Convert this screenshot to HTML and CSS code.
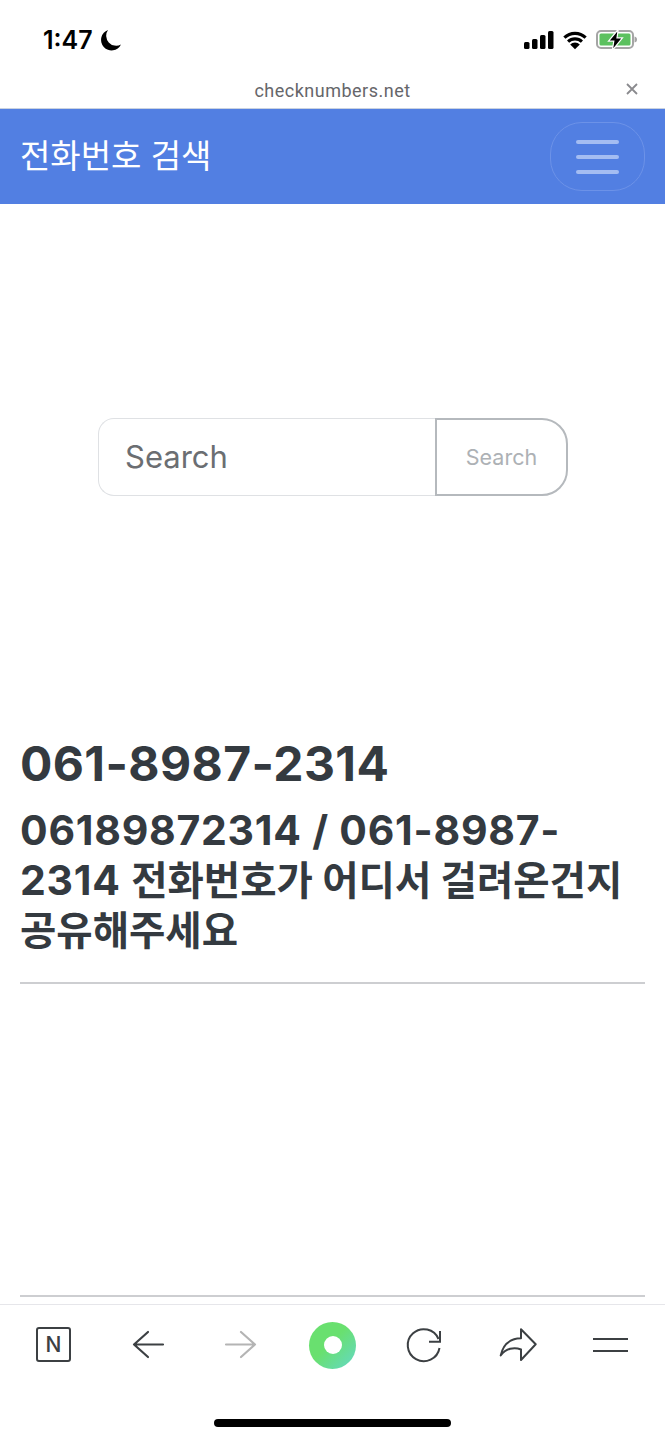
FILE: index.html
```html
<!DOCTYPE html>
<html lang="ko">
<head>
  <meta charset="UTF-8">
  <title>전화번호 검색</title>
  <link rel="stylesheet" href="styles.css">
</head>
<body>

  <div class="status-bar">
    <div class="status-left">
      <span class="clock">1:47</span>
      <svg class="moon" width="22" height="22" viewBox="0 0 22 22"><path d="M8 1A10.500 10.500 0 1 0 21 15.500 A10 10 0 0 1 8 1Z" fill="#000"/></svg>
    </div>
    <div class="status-right">
      <svg width="30" height="18" viewBox="0 0 30 18"><rect x="0" y="11" width="5.500" height="7" rx="1.500"/><rect x="8" y="8" width="5.500" height="10" rx="1.500"/><rect x="16" y="4" width="5.500" height="14" rx="1.500"/><rect x="24" y="0" width="5.500" height="18" rx="1.500"/></svg>
      <svg width="24" height="19" viewBox="0 0 26 19"><path d="M1.500 6.500a16.500 16.500 0 0 1 23 0M5.500 10.700a11 11 0 0 1 15 0" fill="none" stroke="#000" stroke-width="3.400"/><path d="M13 19l-5.200-5.300a7.500 7.500 0 0 1 10.400 0z"/></svg>
      <svg width="42" height="22" viewBox="0 0 42 22"><rect x="1" y="2" width="36" height="17" rx="4" fill="#fff" stroke="#a5a5a5" stroke-width="2"/><rect x="3.500" y="4.500" width="31" height="12" rx="1.500" fill="#5cc15f"/><path d="M38.500 7.500c2 .5 2.500 1.500 2.500 3s-.5 2.500-2.500 3z" fill="#a5a5a5"/><path d="M22.200 .5L12.500 12.200H17.800L16.300 21.500L26.500 8.800H21Z" fill="#000" stroke="#fff" stroke-width="1.200"/></svg>
    </div>
  </div>

  <div class="url-bar">
    <span class="url">checknumbers.net</span>
    <svg class="url-close" width="12" height="12" viewBox="0 0 12 12"><path d="M1 1l10 10M11 1L1 11" stroke="#8a8a8e" stroke-width="1.800"/></svg>
  </div>

  <nav class="navbar">
    <a class="brand">전화번호 검색</a>
    <button class="toggler">
      <span class="bar"></span>
      <span class="bar"></span>
      <span class="bar"></span>
    </button>
  </nav>

  <form class="search-form">
    <div class="search-input">Search</div>
    <div class="search-btn">Search</div>
  </form>

  <main class="content">
    <h1>061-8987-2314</h1>
    <h2>06189872314 / 061-8987-<br>2314 <span class="ko">전화번호가 어디서 걸려온건지</span><br><span class="ko">공유해주세요</span></h2>
    <hr class="rule">
    <div class="spacer"></div>
    <hr class="rule">
  </main>

  <div class="toolbar">
    <div class="tool-row">
      <svg class="tool" viewBox="0 0 48 40"><rect x="7" y="3" width="33" height="33" rx="2" fill="none" stroke="#3c4043" stroke-width="2"/><text x="23.500" y="27" text-anchor="middle" class="n-letter">N</text></svg>
      <svg class="tool" viewBox="0 0 48 40"><path d="M25 7L11 19.500 25 32M11 19.500H40" fill="none" stroke="#3c4043" stroke-width="2.200" stroke-linecap="round" stroke-linejoin="round"/></svg>
      <svg class="tool" viewBox="0 0 48 40"><path d="M25 7L39 19.500 25 32M39 19.500H10" fill="none" stroke="#b4b4b4" stroke-width="2.200" stroke-linecap="round" stroke-linejoin="round"/></svg>
      <div class="green-dot"><span class="green-hole"></span></div>
      <svg class="tool" viewBox="0 0 48 40"><path d="M36.500 14A16 16 0 1 0 37.500 23M38 6V16.700H27" fill="none" stroke="#3c4043" stroke-width="2"/></svg>
      <svg class="tool" viewBox="0 0 48 40"><path d="M26 4.300L40.700 19.300 26 35V24.500C19 21.500 11 23.500 5.700 30.500 8 20 15 13.500 26 13.300Z" fill="none" stroke="#3c4043" stroke-width="2" stroke-linejoin="round"/></svg>
      <svg class="tool" viewBox="0 0 48 40"><path d="M5 14H40M5 26H40" stroke="#3c4043" stroke-width="2.200"/></svg>
    </div>
    <div class="home-bar"></div>
  </div>

</body>
</html>
```

FILE: styles.css
```css
* {
  box-sizing: border-box;
}

body {
  margin: 0;
  height: 1440px;
  overflow: hidden;
  background: #fff;
  font-family: Inter, 'Noto Sans CJK KR', sans-serif;
  color: #343a40;
}

.status-bar {
  height: 72px;
  padding: 26px 27px 0 43px;
  display: flex;
  justify-content: space-between;
  align-items: flex-start;
}

.status-left {
  display: flex;
  align-items: center;
  gap: 7px;
  height: 28px;
}

.clock {
  font-size: 25px;
  font-weight: 600;
  color: #000;
}

.status-right {
  display: flex;
  align-items: center;
  gap: 9px;
  height: 28px;
}

.url-bar {
  height: 37px;
  border-bottom: 1px solid #c9d2e0;
  display: flex;
  align-items: center;
  justify-content: center;
  position: relative;
}

.url {
  font-family: Roboto, sans-serif;
  font-size: 18px;
  letter-spacing: 0.5px;
  color: #66666a;
}

.url-close {
  position: absolute;
  right: 27px;
  top: 11px;
}

.navbar {
  height: 95px;
  background: #527fe2;
  padding: 0 20px;
  display: flex;
  align-items: center;
  justify-content: space-between;
}

.brand {
  margin-bottom: 5px;
  font-family: 'Noto Sans CJK KR', sans-serif;
  font-size: 33px;
  font-weight: 400;
  color: #fff;
}

.toggler {
  width: 95px;
  height: 69px;
  padding: 0;
  background: none;
  border: 1px solid #6c92e8;
  border-radius: 32px;
  display: flex;
  flex-direction: column;
  align-items: center;
  justify-content: center;
  gap: 11px;
}

.bar {
  width: 43px;
  height: 4px;
  border-radius: 2px;
  background: #a4bdf2;
}

.search-form {
  display: flex;
  width: 470px;
  height: 78px;
  margin: 214px 0 0 98px;
}

.search-input {
  flex: 1;
  border: 1px solid #dfe1e4;
  border-right: none;
  border-radius: 16px 0 0 16px;
  padding: 0 0 2px 26px;
  display: flex;
  align-items: center;
  font-size: 31px;
  color: #6b6e72;
}

.search-btn {
  width: 133px;
  border: 2px solid #b5b9bd;
  border-radius: 0 26px 26px 0;
  display: flex;
  align-items: center;
  justify-content: center;
  font-size: 21.500px;
  color: #adb1b5;
}

.content {
  padding: 0 20px;
}

h1 {
  margin: 240px 0 0;
  font-size: 48px;
  line-height: 56px;
  font-weight: 700;
  letter-spacing: 0.4px;
}

h2 {
  margin: 13px 0 0;
  font-size: 41px;
  line-height: 50px;
  font-weight: 700;
  letter-spacing: 0.75px;
}

.ko {
  font-size: 39.500px;
  line-height: 1;
  letter-spacing: 0;
}

.rule {
  margin: 0;
  border: none;
  border-top: 2px solid #cdced1;
}

h2 + .rule {
  margin-top: 27px;
}

.spacer {
  height: 311px;
}

.toolbar {
  position: absolute;
  left: 0;
  right: 0;
  top: 1304px;
  height: 136px;
  background: #fff;
  border-top: 1px solid #e6e6ea;
}

.tool-row {
  display: flex;
  align-items: center;
  gap: 45px;
  height: 80px;
  padding-left: 30px;
}

.tool {
  width: 48px;
  height: 40px;
}

.n-letter {
  font-family: Inter, sans-serif;
  font-size: 21px;
  font-weight: 500;
  fill: #3c4043;
}

.green-dot {
  width: 47px;
  height: 47px;
  margin-right: 1px;
  border-radius: 50%;
  background: linear-gradient(135deg, #69e06f 45%, #64d8c8 100%);
  display: flex;
  align-items: center;
  justify-content: center;
}

.green-hole {
  width: 18px;
  height: 18px;
  border-radius: 50%;
  background: #fff;
}

.home-bar {
  position: absolute;
  left: 214px;
  top: 114px;
  width: 237px;
  height: 8px;
  border-radius: 4px;
  background: #000;
}
```
